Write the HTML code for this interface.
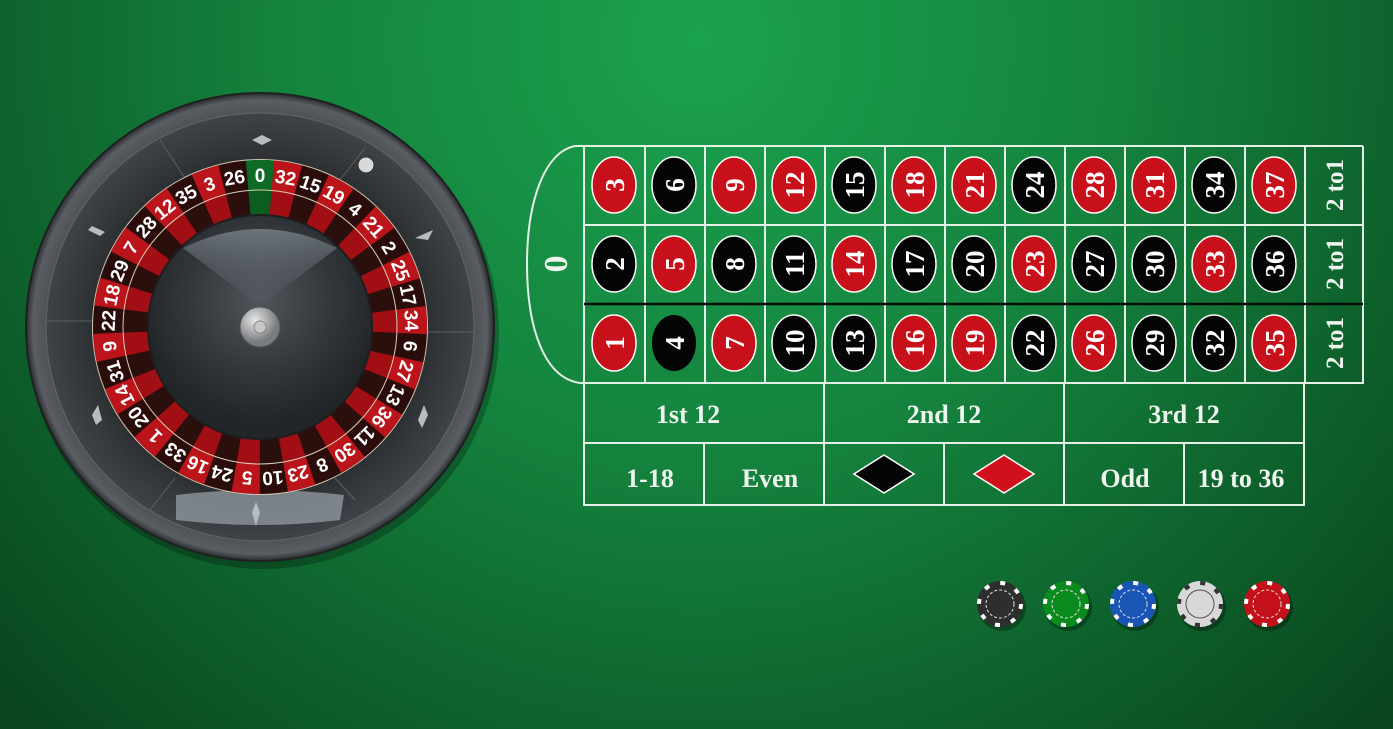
<!DOCTYPE html>
<html><head><meta charset="utf-8"><style>
html,body{margin:0;padding:0;width:1393px;height:729px;overflow:hidden;background:#0f5e2c}
svg{display:block}
.wn{font-family:"Liberation Sans Narrow","Liberation Sans",sans-serif;font-weight:bold;font-size:19px;fill:#fff;text-anchor:middle}
.tn{font-family:"Liberation Serif",serif;font-weight:bold;font-size:27px;fill:#fff;text-anchor:middle}
.tl{font-family:"Liberation Serif",serif;font-weight:bold;font-size:26px;fill:#eef5ee;text-anchor:middle}
</style></head><body>
<svg width="1393" height="729" viewBox="0 0 1393 729" xmlns="http://www.w3.org/2000/svg">
<defs>
<radialGradient id="bg" cx="700" cy="40" r="950" gradientUnits="userSpaceOnUse">
<stop offset="0" stop-color="#1ba24f"/><stop offset="0.45" stop-color="#14823d"/><stop offset="1" stop-color="#09461e"/></radialGradient>
<radialGradient id="bowl" cx="260" cy="327" r="234" gradientUnits="userSpaceOnUse">
<stop offset="0.7" stop-color="#35383c"/><stop offset="0.9" stop-color="#4b4f54"/><stop offset="0.97" stop-color="#5a5e63"/><stop offset="1" stop-color="#2a2c2e"/></radialGradient>
<radialGradient id="inner" cx="260" cy="327" r="214" gradientUnits="userSpaceOnUse">
<stop offset="0.75" stop-color="#2a2d30"/><stop offset="1" stop-color="#3f4347"/></radialGradient>
<radialGradient id="cone" cx="260" cy="300" r="120" gradientUnits="userSpaceOnUse">
<stop offset="0" stop-color="#50555b"/><stop offset="0.6" stop-color="#33373b"/><stop offset="1" stop-color="#232629"/></radialGradient>
<radialGradient id="hub" cx="255" cy="320" r="22" gradientUnits="userSpaceOnUse">
<stop offset="0" stop-color="#e8e8e8"/><stop offset="1" stop-color="#7a7d80"/></radialGradient>
<linearGradient id="hl" x1="0" y1="0" x2="0" y2="1"><stop offset="0" stop-color="#9aa4ad" stop-opacity="0.8"/><stop offset="1" stop-color="#5a636b" stop-opacity="0.2"/></linearGradient>
</defs>
<rect width="1393" height="729" fill="url(#bg)"/>

<!-- wheel -->
<circle cx="263" cy="333" r="236" fill="#000" opacity="0.25"/>
<circle cx="260" cy="327" r="234" fill="url(#bowl)" stroke="#1e2022" stroke-width="2"/>
<circle cx="260" cy="327" r="214" fill="url(#inner)" stroke="#5a5f64" stroke-width="1.5"/>
<g stroke="#5a5f64" stroke-width="1">
<line x1="46" y1="321" x2="100" y2="321"/><line x1="420" y1="332" x2="474" y2="332"/>
<line x1="160" y1="140" x2="185" y2="178"/><line x1="365" y1="148" x2="340" y2="180"/>
<line x1="150" y1="510" x2="175" y2="478"/><line x1="355" y1="500" x2="335" y2="478"/>
</g>
<path d="M176,495 Q260,485 344,495 L340,520 Q260,530 176,520 Z" fill="#9aa3ab" opacity="0.7"/>
<g fill="#b8bcc0">
<path d="M252,140 L262,135 L272,140 L262,145Z"/><path d="M92,226 L105,232 L100,236 L88,230Z"/>
<path d="M415,238 L433,230 L428,240Z"/><path d="M92,415 L98,405 L102,420 L96,425Z"/>
<path d="M418,420 L424,405 L428,415 L422,428Z"/><path d="M252,512 L256,502 L260,512 L256,526Z"/>
</g>
<circle cx="366" cy="165" r="8" fill="#d8d8d8" stroke="#333" stroke-width="1"/>
<circle cx="260" cy="327" r="168" fill="#cfc6b0"/>
<circle cx="260" cy="327" r="152" fill="none" stroke="#2a0d0b" stroke-width="30"/>
<circle cx="260" cy="327" r="152" fill="none" stroke="#bb141a" stroke-width="30" stroke-dasharray="25.812 25.812" stroke-dashoffset="25.812" transform="rotate(-94.865 260 327)"/>
<circle cx="260" cy="327" r="152" fill="none" stroke="#0d6b25" stroke-width="30" stroke-dasharray="25.812 1000" transform="rotate(-94.865 260 327)"/>
<circle cx="260" cy="327" r="123" fill="none" stroke="#2b0f0d" stroke-width="28"/>
<circle cx="260" cy="327" r="123" fill="none" stroke="#a10e13" stroke-width="28" stroke-dasharray="20.887 20.887" stroke-dashoffset="20.887" transform="rotate(-94.865 260 327)"/>
<circle cx="260" cy="327" r="123" fill="none" stroke="#0b5e20" stroke-width="28" stroke-dasharray="20.887 1000" transform="rotate(-94.865 260 327)"/>
<circle cx="260" cy="327" r="137" fill="none" stroke="#d8cfb8" stroke-width="1"/>
<g class="wn">
<text x="260" y="182">0</text>
<text x="260" y="182" transform="rotate(9.73 260 327)">32</text>
<text x="260" y="182" transform="rotate(19.46 260 327)">15</text>
<text x="260" y="182" transform="rotate(29.19 260 327)">19</text>
<text x="260" y="182" transform="rotate(38.92 260 327)">4</text>
<text x="260" y="182" transform="rotate(48.65 260 327)">21</text>
<text x="260" y="182" transform="rotate(58.38 260 327)">2</text>
<text x="260" y="182" transform="rotate(68.11 260 327)">25</text>
<text x="260" y="182" transform="rotate(77.84 260 327)">17</text>
<text x="260" y="182" transform="rotate(87.57 260 327)">34</text>
<text x="260" y="182" transform="rotate(97.30 260 327)">6</text>
<text x="260" y="182" transform="rotate(107.03 260 327)">27</text>
<text x="260" y="182" transform="rotate(116.76 260 327)">13</text>
<text x="260" y="182" transform="rotate(126.49 260 327)">36</text>
<text x="260" y="182" transform="rotate(136.22 260 327)">11</text>
<text x="260" y="182" transform="rotate(145.95 260 327)">30</text>
<text x="260" y="182" transform="rotate(155.68 260 327)">8</text>
<text x="260" y="182" transform="rotate(165.41 260 327)">23</text>
<text x="260" y="182" transform="rotate(175.14 260 327)">10</text>
<text x="260" y="182" transform="rotate(184.86 260 327)">5</text>
<text x="260" y="182" transform="rotate(194.59 260 327)">24</text>
<text x="260" y="182" transform="rotate(204.32 260 327)">16</text>
<text x="260" y="182" transform="rotate(214.05 260 327)">33</text>
<text x="260" y="182" transform="rotate(223.78 260 327)">1</text>
<text x="260" y="182" transform="rotate(233.51 260 327)">20</text>
<text x="260" y="182" transform="rotate(243.24 260 327)">14</text>
<text x="260" y="182" transform="rotate(252.97 260 327)">31</text>
<text x="260" y="182" transform="rotate(262.70 260 327)">9</text>
<text x="260" y="182" transform="rotate(272.43 260 327)">22</text>
<text x="260" y="182" transform="rotate(282.16 260 327)">18</text>
<text x="260" y="182" transform="rotate(291.89 260 327)">29</text>
<text x="260" y="182" transform="rotate(301.62 260 327)">7</text>
<text x="260" y="182" transform="rotate(311.35 260 327)">28</text>
<text x="260" y="182" transform="rotate(321.08 260 327)">12</text>
<text x="260" y="182" transform="rotate(330.81 260 327)">35</text>
<text x="260" y="182" transform="rotate(340.54 260 327)">3</text>
<text x="260" y="182" transform="rotate(350.27 260 327)">26</text>
</g>
<circle cx="260" cy="327" r="112" fill="url(#cone)" stroke="#1c1e20" stroke-width="2"/>
<path d="M183,248 Q260,210 337,248 L268,300 Q260,305 252,300 Z" fill="url(#hl)" opacity="0.7"/>
<circle cx="260" cy="327" r="20" fill="url(#hub)" stroke="#555" stroke-width="1"/>
<circle cx="260" cy="327" r="6" fill="#c8c8c8" stroke="#888" stroke-width="1"/>

<!-- table -->
<g fill="none" stroke="#e6f0e6" stroke-width="2">
<path d="M1363,146 H575 C545,152 527,200 527,264 C527,330 545,378 580,383 H1363 V146"/>
<line x1="584" y1="225" x2="1363" y2="225"/>
<line x1="584" y1="146" x2="584" y2="505"/>
<line x1="645" y1="146" x2="645" y2="383"/><line x1="705" y1="146" x2="705" y2="383"/>
<line x1="765" y1="146" x2="765" y2="383"/><line x1="825" y1="146" x2="825" y2="383"/>
<line x1="885" y1="146" x2="885" y2="383"/><line x1="945" y1="146" x2="945" y2="383"/>
<line x1="1005" y1="146" x2="1005" y2="383"/><line x1="1065" y1="146" x2="1065" y2="383"/>
<line x1="1125" y1="146" x2="1125" y2="383"/><line x1="1185" y1="146" x2="1185" y2="383"/>
<line x1="1245" y1="146" x2="1245" y2="383"/><line x1="1305" y1="146" x2="1305" y2="383"/>
<rect x="584" y="383" width="720" height="122"/>
<line x1="584" y1="443" x2="1304" y2="443"/>
<line x1="824" y1="383" x2="824" y2="505"/><line x1="1064" y1="383" x2="1064" y2="505"/>
<line x1="704" y1="443" x2="704" y2="505"/><line x1="944" y1="443" x2="944" y2="505"/><line x1="1184" y1="443" x2="1184" y2="505"/>
</g>
<line x1="584" y1="304" x2="1363" y2="304" stroke="#0a0a0a" stroke-width="2.5"/>
<text class="tl" x="0" y="0" transform="translate(567,264) rotate(-90)" style="font-size:34px">0</text>

<g stroke="#fff" stroke-width="1.5">
<g fill="#c8101a">
<ellipse cx="614" cy="185" rx="22" ry="28"/><ellipse cx="734" cy="185" rx="22" ry="28"/><ellipse cx="794" cy="185" rx="22" ry="28"/>
<ellipse cx="914" cy="185" rx="22" ry="28"/><ellipse cx="974" cy="185" rx="22" ry="28"/><ellipse cx="1094" cy="185" rx="22" ry="28"/>
<ellipse cx="1154" cy="185" rx="22" ry="28"/><ellipse cx="1274" cy="185" rx="22" ry="28"/>
<ellipse cx="674" cy="264" rx="22" ry="28"/><ellipse cx="854" cy="264" rx="22" ry="28"/><ellipse cx="1034" cy="264" rx="22" ry="28"/><ellipse cx="1214" cy="264" rx="22" ry="28"/>
<ellipse cx="614" cy="343" rx="22" ry="28"/><ellipse cx="734" cy="343" rx="22" ry="28"/><ellipse cx="914" cy="343" rx="22" ry="28"/>
<ellipse cx="974" cy="343" rx="22" ry="28"/><ellipse cx="1094" cy="343" rx="22" ry="28"/><ellipse cx="1274" cy="343" rx="22" ry="28"/>
</g>
<g fill="#050505">
<ellipse cx="674" cy="185" rx="22" ry="28"/><ellipse cx="854" cy="185" rx="22" ry="28"/><ellipse cx="1034" cy="185" rx="22" ry="28"/><ellipse cx="1214" cy="185" rx="22" ry="28"/>
<ellipse cx="614" cy="264" rx="22" ry="28"/><ellipse cx="734" cy="264" rx="22" ry="28"/><ellipse cx="794" cy="264" rx="22" ry="28"/>
<ellipse cx="914" cy="264" rx="22" ry="28"/><ellipse cx="974" cy="264" rx="22" ry="28"/><ellipse cx="1094" cy="264" rx="22" ry="28"/>
<ellipse cx="1154" cy="264" rx="22" ry="28"/><ellipse cx="1274" cy="264" rx="22" ry="28"/>
<ellipse cx="794" cy="343" rx="22" ry="28"/><ellipse cx="854" cy="343" rx="22" ry="28"/><ellipse cx="1034" cy="343" rx="22" ry="28"/>
<ellipse cx="1154" cy="343" rx="22" ry="28"/><ellipse cx="1214" cy="343" rx="22" ry="28"/>
</g>
</g>
<ellipse cx="674" cy="343" rx="22" ry="28" fill="#050505"/>

<g class="tn">
<text transform="translate(624,185) rotate(-90)">3</text><text transform="translate(684,185) rotate(-90)">6</text>
<text transform="translate(744,185) rotate(-90)">9</text><text transform="translate(804,185) rotate(-90)">12</text>
<text transform="translate(864,185) rotate(-90)">15</text><text transform="translate(924,185) rotate(-90)">18</text>
<text transform="translate(984,185) rotate(-90)">21</text><text transform="translate(1044,185) rotate(-90)">24</text>
<text transform="translate(1104,185) rotate(-90)">28</text><text transform="translate(1164,185) rotate(-90)">31</text>
<text transform="translate(1224,185) rotate(-90)">34</text><text transform="translate(1284,185) rotate(-90)">37</text>
<text transform="translate(624,264) rotate(-90)">2</text><text transform="translate(684,264) rotate(-90)">5</text>
<text transform="translate(744,264) rotate(-90)">8</text><text transform="translate(804,264) rotate(-90)">11</text>
<text transform="translate(864,264) rotate(-90)">14</text><text transform="translate(924,264) rotate(-90)">17</text>
<text transform="translate(984,264) rotate(-90)">20</text><text transform="translate(1044,264) rotate(-90)">23</text>
<text transform="translate(1104,264) rotate(-90)">27</text><text transform="translate(1164,264) rotate(-90)">30</text>
<text transform="translate(1224,264) rotate(-90)">33</text><text transform="translate(1284,264) rotate(-90)">36</text>
<text transform="translate(624,343) rotate(-90)">1</text><text transform="translate(684,343) rotate(-90)">4</text>
<text transform="translate(744,343) rotate(-90)">7</text><text transform="translate(804,343) rotate(-90)">10</text>
<text transform="translate(864,343) rotate(-90)">13</text><text transform="translate(924,343) rotate(-90)">16</text>
<text transform="translate(984,343) rotate(-90)">19</text><text transform="translate(1044,343) rotate(-90)">22</text>
<text transform="translate(1104,343) rotate(-90)">26</text><text transform="translate(1164,343) rotate(-90)">29</text>
<text transform="translate(1224,343) rotate(-90)">32</text><text transform="translate(1284,343) rotate(-90)">35</text>
</g>
<g class="tl" style="font-size:25px">
<text transform="translate(1343,185) rotate(-90)">2 to1</text>
<text transform="translate(1343,264) rotate(-90)">2 to1</text>
<text transform="translate(1343,343) rotate(-90)">2 to1</text>
</g>
<g class="tl">
<text x="688" y="423">1st 12</text><text x="944" y="423">2nd 12</text><text x="1184" y="423">3rd 12</text>
<text x="650" y="487">1-18</text><text x="770" y="487">Even</text>
<text x="1125" y="487">Odd</text><text x="1241" y="487">19 to 36</text>
</g>
<path d="M884,455 L914,474 L884,493 L854,474Z" fill="#050505" stroke="#fff" stroke-width="1.5"/>
<path d="M1004,455 L1034,474 L1004,493 L974,474Z" fill="#d0101a" stroke="#fff" stroke-width="1.5"/>

<!-- chips -->
<g>
<circle cx="1002" cy="607" r="24" fill="#000" opacity="0.3"/>
<circle cx="1000" cy="604" r="23" fill="#2e2e2e"/>
<circle cx="1000" cy="604" r="21" fill="none" stroke="#fff" stroke-width="4" stroke-dasharray="5 11.5"/>
<circle cx="1000" cy="604" r="14" fill="none" stroke="#ddd" stroke-width="1" stroke-dasharray="3 2"/>
<circle cx="1068" cy="607" r="24" fill="#000" opacity="0.3"/>
<circle cx="1066" cy="604" r="23" fill="#0b8a1e"/>
<circle cx="1066" cy="604" r="21" fill="none" stroke="#fff" stroke-width="4" stroke-dasharray="5 11.5"/>
<circle cx="1066" cy="604" r="14" fill="none" stroke="#ddd" stroke-width="1" stroke-dasharray="3 2"/>
<circle cx="1135" cy="607" r="24" fill="#000" opacity="0.3"/>
<circle cx="1133" cy="604" r="23" fill="#1855b5"/>
<circle cx="1133" cy="604" r="21" fill="none" stroke="#fff" stroke-width="4" stroke-dasharray="5 11.5"/>
<circle cx="1133" cy="604" r="14" fill="none" stroke="#ddd" stroke-width="1" stroke-dasharray="3 2"/>
<circle cx="1202" cy="607" r="24" fill="#000" opacity="0.3"/>
<circle cx="1200" cy="604" r="23" fill="#d8d8d8"/>
<circle cx="1200" cy="604" r="21" fill="none" stroke="#333" stroke-width="4" stroke-dasharray="5 11.5"/>
<circle cx="1200" cy="604" r="14" fill="none" stroke="#555" stroke-width="1"/>
<circle cx="1269" cy="607" r="24" fill="#000" opacity="0.3"/>
<circle cx="1267" cy="604" r="23" fill="#c3101a"/>
<circle cx="1267" cy="604" r="21" fill="none" stroke="#fff" stroke-width="4" stroke-dasharray="5 11.5"/>
<circle cx="1267" cy="604" r="14" fill="none" stroke="#ddd" stroke-width="1" stroke-dasharray="3 2"/>
</g>
</svg>
</body></html>
